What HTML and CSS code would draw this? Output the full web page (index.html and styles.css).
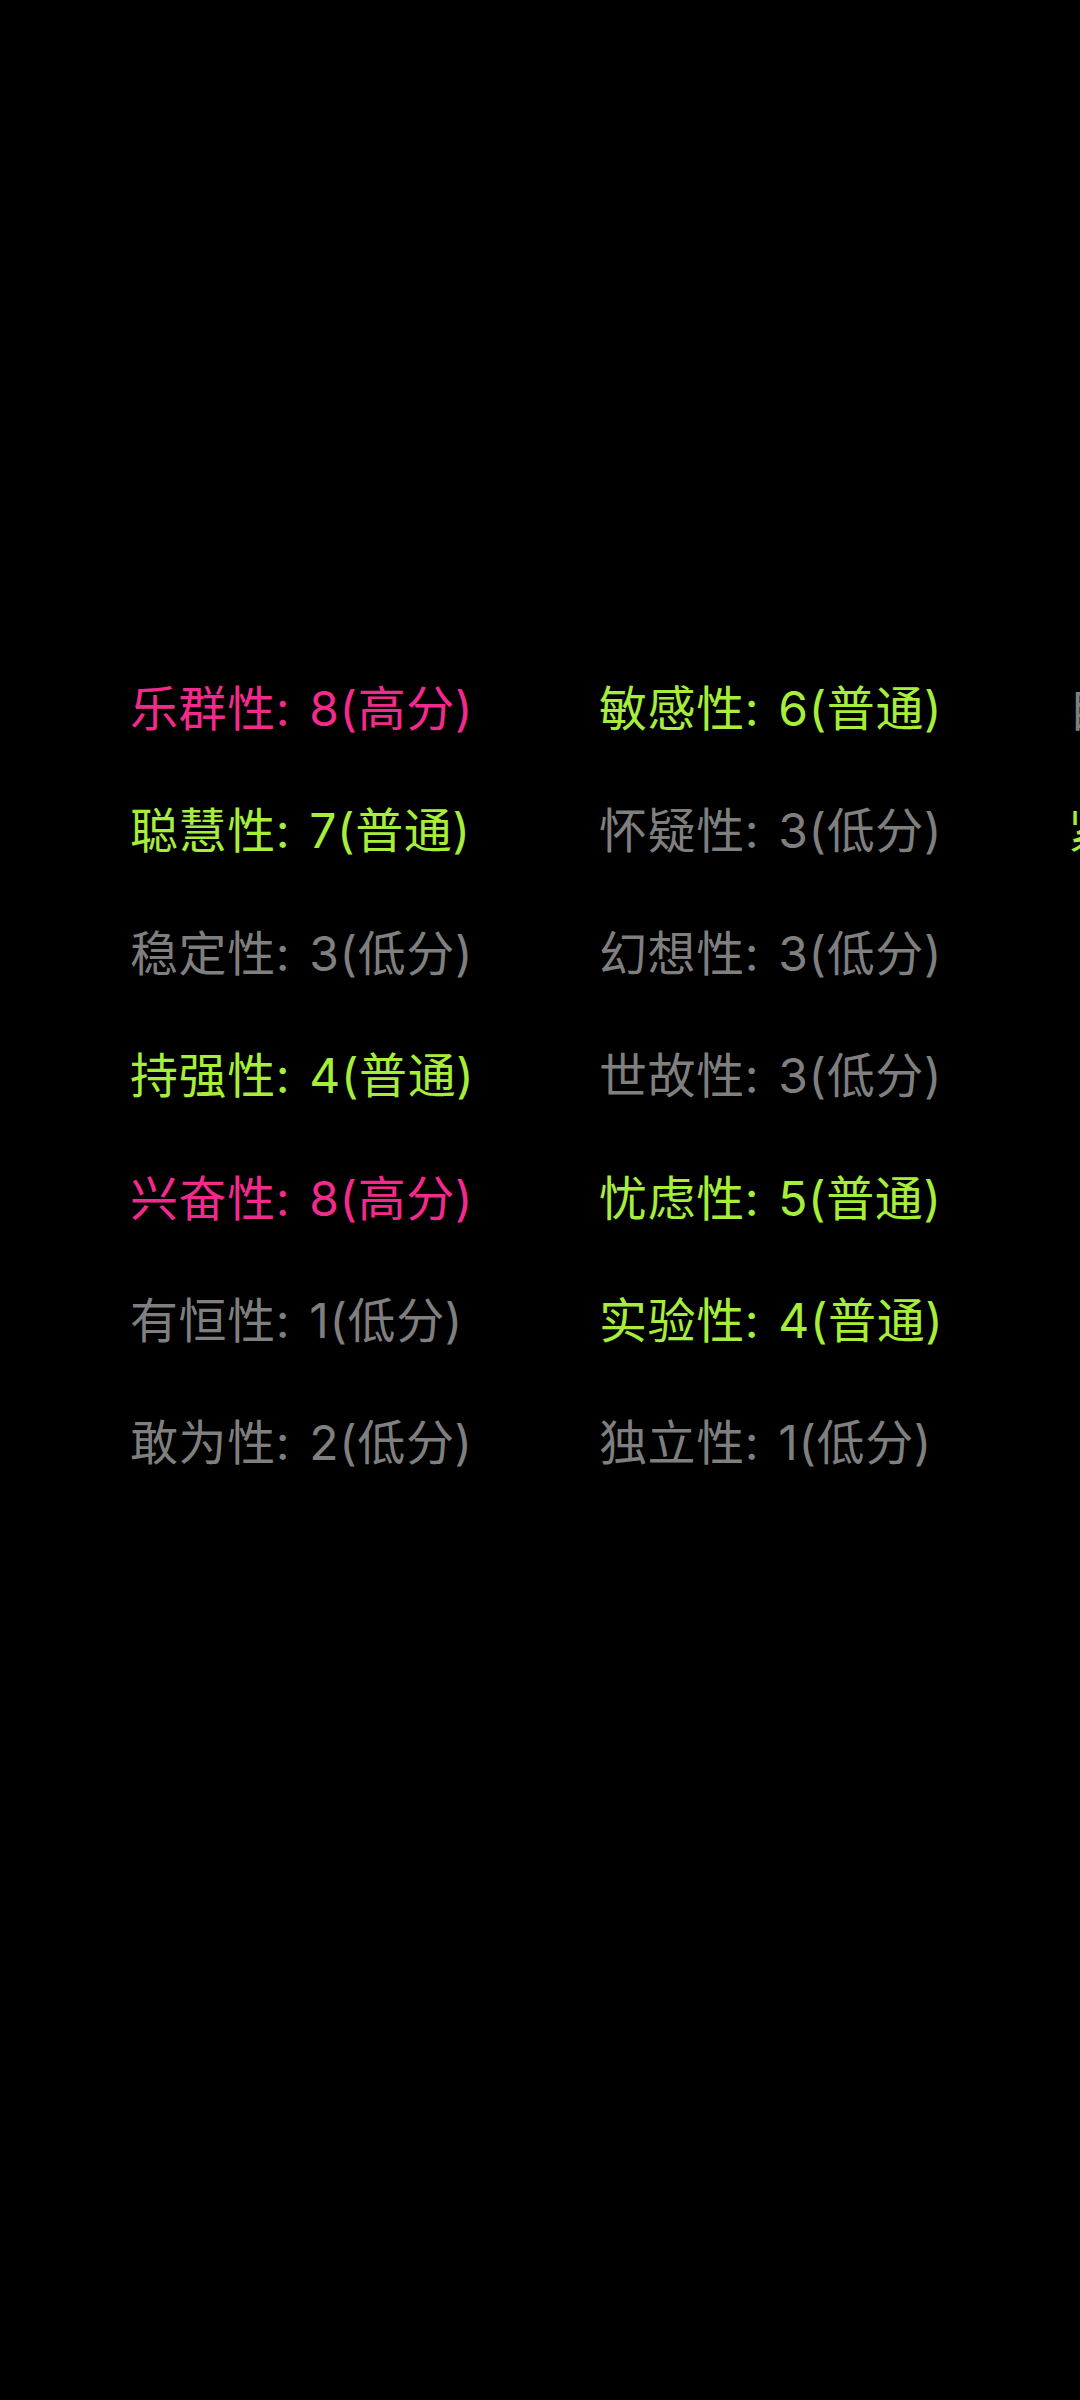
FILE: index.html
```html
<!DOCTYPE html>
<html lang="zh-CN">
<head>
<meta charset="utf-8">
<title>16PF</title>
<link rel="stylesheet" href="styles.css">
</head>
<body>
<div class="screen">
  <div class="grid">
    <div class="item high">乐群性: 8(高分)</div>
    <div class="item mid">聪慧性: 7(普通)</div>
    <div class="item low">稳定性: 3(低分)</div>
    <div class="item mid">持强性: 4(普通)</div>
    <div class="item high">兴奋性: 8(高分)</div>
    <div class="item low">有恒性: 1(低分)</div>
    <div class="item low">敢为性: 2(低分)</div>
    <div class="item mid">敏感性: 6(普通)</div>
    <div class="item low">怀疑性: 3(低分)</div>
    <div class="item low">幻想性: 3(低分)</div>
    <div class="item low">世故性: 3(低分)</div>
    <div class="item mid">忧虑性: 5(普通)</div>
    <div class="item mid">实验性: 4(普通)</div>
    <div class="item low">独立性: 1(低分)</div>
    <div class="item low">自律性: 3(低分)</div>
    <div class="item mid">紧张性: 5(普通)</div>
  </div>
</div>
</body>
</html>
```
FILE: styles.css
```css
html, body {
  margin: 0;
  padding: 0;
  background: #000;
}
.screen {
  width: 1080px;
  height: 2400px;
  overflow: hidden;
  background: #000;
  font-family: Inter, "Noto Sans CJK SC", sans-serif;
}
.grid {
  padding-top: 648px;
  padding-left: 130px;
  display: grid;
  grid-auto-flow: column;
  grid-template-rows: repeat(7, 122.4px);
  grid-auto-columns: 469px;
}
.item {
  font-size: 48px;
  line-height: 122.4px;
  white-space: nowrap;
  word-spacing: 5px;
  letter-spacing: 0.6px;
}
.high { color: #f22a8c; }
.mid { color: #a6ee3a; }
.low { color: #7f7f7f; }
```
